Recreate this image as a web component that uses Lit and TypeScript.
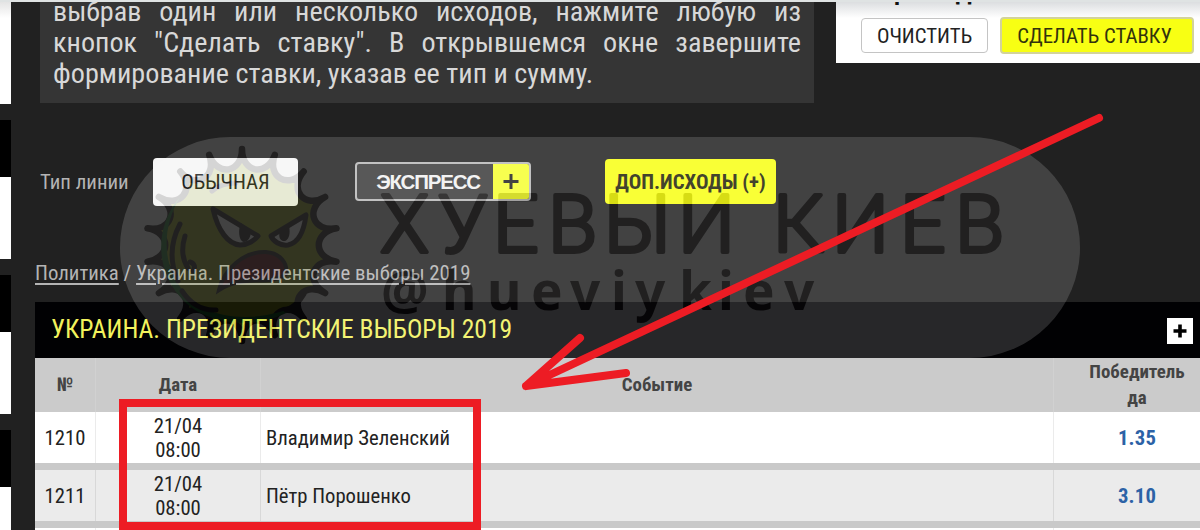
import { LitElement, html, css, svg } from 'lit'
import { customElement, property } from 'lit/decorators.js'

interface Outcome {
  id: string;
  day: string;
  time: string;
  name: string;
  odds: string;
}

@customElement('odds-table')
export class OddsTable extends LitElement {
  @property({type: String}) heading = '';
  @property({type: Array}) rows: Outcome[] = [];

  static styles = css`
    :host {
      display: block;
    }

    .bar {
      display: flex;
      align-items: center;
      justify-content: space-between;
      box-sizing: border-box;
      height: 56px;
      padding: 0 7px 2px 16px;
      background: #010103;
    }

    .title {
      color: #f2f25c;
      font-size: 25.6px;
      white-space: nowrap;
    }

    .add {
      width: 26px;
      height: 26px;
      margin-top: 4px;
    }

    .row {
      display: grid;
      grid-template-columns: 60px 165px 793px 167px;
      height: 51px;
      border-bottom: 7px solid #c9c9c9;
      background: #fff;
      color: #222;
      font-size: 20.7px;
      line-height: 24px;
    }

    .row.even {
      background: #ebebeb;
    }

    .row.head {
      height: 54px;
      border-bottom: 0;
      background: #cbcbcb;
      color: #444;
      font-size: 18.9px;
      font-weight: 700;
      line-height: 26px;
    }

    .cell {
      display: flex;
      align-items: center;
      justify-content: center;
      padding-top: 1px;
      text-align: center;
      border-left: 1px solid rgb(0 0 0 / 8%);
    }

    .head .cell {
      padding-top: 0;
      border-color: rgb(255 255 255 / 12%);
    }

    .cell:first-child {
      border-left: 0;
    }

    .name {
      justify-content: flex-start;
      padding-left: 5px;
    }

    .odds {
      color: #2c62a6;
      font-weight: 700;
      letter-spacing: 0.2px;
    }
  `

  render() {
    return html`
      <div class="bar">
        <div class="title">${this.heading}</div>
        <svg class="add" viewBox="0 0 26 26">
          <rect width="26" height="26" fill="#fff"/>
          <path d="M13 6.5v13M6.5 13h13" stroke="#000" stroke-width="3.6"/>
        </svg>
      </div>
      <div class="row head">
        <div class="cell">№</div>
        <div class="cell">Дата</div>
        <div class="cell">Событие</div>
        <div class="cell">Победитель<br>да</div>
      </div>
      ${this.rows.map((row, i) => html`
        <div class="row ${i % 2 ? 'even' : ''}">
          <div class="cell">${row.id}</div>
          <div class="cell">${row.day}<br>${row.time}</div>
          <div class="cell name">${row.name}</div>
          <div class="cell odds">${row.odds}</div>
        </div>
      `)}
    `
  }
}

@customElement('water-mark')
export class WaterMark extends LitElement {
  static styles = css`
    :host {
      display: block;
      opacity: 0.15;
    }

    svg {
      display: block;
    }

    .big {
      font: 300 80px Roboto, sans-serif;
      fill: #231f20;
      stroke: #231f20;
      stroke-width: 4px;
      stroke-linejoin: round;
    }

    .handle {
      font: 700 53px "Noto Sans", sans-serif;
      fill: #231f20;
    }
  `

  // body with 18 spikes, the valleys are curved inwards
  private _spikes() {
    const point = (deg: number, r: number) => {
      const a = (deg - 90) * Math.PI / 180;
      return `${(122 + r * Math.cos(a)).toFixed(1)} ${(108 + r * Math.sin(a)).toFixed(1)}`;
    }

    let d = `M${point(0, 96)}`;
    for (let i = 0; i < 18; i++) {
      const deg = i * 20;
      d += `C${point(deg, 72)} ${point(deg + 20, 72)} ${point(deg + 20, 96)}`;
    }
    return d + 'Z';
  }

  render() {
    return svg`
      <svg width="960" height="221" viewBox="0 0 960 221">
        <rect width="960" height="221" rx="110.5" fill="#fff"/>
        <path d=${this._spikes()} fill="#9aa81c" stroke="#231f20" stroke-width="6.5" stroke-linejoin="round"/>
        <path d="M60 60C36 100 44 150 86 172C110 184 150 182 178 168C150 192 94 192 66 166C34 136 34 90 60 60Z" fill="#1c7a2c"/>
        <g fill="none" stroke="#231f20" stroke-width="5" stroke-linecap="round">
          <path d="M60 87C50 106 50 126 58 144M65 99C61 112 62 122 68 131M70 125C74 126 76 130 73 134"/>
          <path d="M62 154C70 166 82 174 96 173M166 173C174 170 180 164 184 157M92 54C99 48 108 46 116 46"/>
        </g>
        <g fill="#fff" stroke="#231f20" stroke-width="5" stroke-linejoin="round">
          <path d="M93 72C98 94 108 107 120 108C128 108 135 103 138 99Z"/>
          <path d="M186 78C184 94 178 106 168 108C160 109 153 104 151 99Z"/>
        </g>
        <path d="M121 86l10 8c0 6-3 11-7 11s-7-10-3-19ZM160 94l9-5c2 9-1 15-5 15s-6-5-4-10Z" fill="#231f20"/>
        <path d="M99 153C104 132 124 114 146 115C160 116 168 126 166 137C150 150 124 136 99 153Z" fill="#6b1019" stroke="#231f20" stroke-width="4"/>
        <text class="big" y="115" x="260 318 373 428 484 558 653 712 780 835">ХУЕВЫИКИЕВ</text>
        <text class="handle" y="173" x="261 322 367 411 450 491 515 559 598 623 664">@hueviykiev</text>
      </svg>
    `
  }
}

@customElement('app-root')
export class AppRoot extends LitElement {
  @property({type: Array}) rows: Outcome[] = [
    {id: '1210', day: '21/04', time: '08:00', name: 'Владимир Зеленский', odds: '1.35'},
    {id: '1211', day: '21/04', time: '08:00', name: 'Пётр Порошенко', odds: '3.10'},
    {id: '', day: '', time: '', name: '', odds: ''},
  ];

  static styles = css`
    :host {
      position: relative;
      display: flex;
      box-sizing: border-box;
      width: 1200px;
      height: 530px;
      overflow: hidden;
      border-top: 2px solid #dfe3e3;
      background: #212121;
      font-family: "Roboto Condensed", Roboto, sans-serif;
      font-stretch: 75%;
    }

    .side {
      display: flex;
      flex: none;
      flex-direction: column;
      gap: 16px;
      width: 11px;
    }

    .block {
      flex: none;
      box-sizing: border-box;
      height: 139px;
      border-top: 57px solid #000;
      background: #fff;
    }

    .block:first-child {
      height: 102px;
      border-top: 0;
      background: linear-gradient(#e4e4e4, #fff 16px);
    }

    .main {
      flex: none;
      width: 1165px;
      margin-left: 24px;
    }

    .top {
      display: flex;
      align-items: flex-start;
      height: 101px;
      padding-left: 5px;
    }

    .hint {
      display: flex;
      flex-direction: column;
      justify-content: flex-end;
      box-sizing: border-box;
      width: 774px;
      height: 101px;
      padding: 0 13px 14px;
      overflow: hidden;
      background: #353535;
      color: #d8d8d8;
      font-size: 28.2px;
      line-height: 31px;
    }

    .line {
      text-align: justify;
      text-align-last: justify;
      white-space: nowrap;
    }

    .line.last {
      text-align-last: left;
    }

    .slip {
      flex: 1;
      box-sizing: border-box;
      height: 61px;
      margin-left: 22px;
      padding-left: 25px;
      overflow: hidden;
      background: linear-gradient(#dcdee0, #fff 16px);
    }

    .slip-title {
      display: flex;
      gap: 49px;
      height: 38px;
      margin-top: -23px;
      padding-left: 33px;
      color: #111;
      font-size: 25px;
      font-weight: 700;
      line-height: 25px;
    }

    .buttons {
      display: flex;
      gap: 12px;
    }

    .btn {
      display: flex;
      align-items: center;
      justify-content: center;
      box-sizing: border-box;
      border-radius: 4px;
      color: #222;
      font-size: 20.8px;
      white-space: nowrap;
    }

    .clear {
      width: 127px;
      height: 35px;
      margin-top: 1px;
      border: 1.5px solid #c4c4c4;
      background: #fff;
    }

    .bet {
      width: 194px;
      height: 37px;
      padding-right: 5px;
      border: 2px solid #d3d39a;
      background: #f8ff13;
      color: #33330c;
    }

    .types {
      display: flex;
      align-items: center;
      height: 47px;
      padding: 55px 0 0 5px;
    }

    .label {
      width: 113px;
      color: #b4b4b4;
      font-size: 20.8px;
    }

    .usual {
      width: 145px;
      height: 48px;
      background: #f6f6f6;
    }

    .express {
      width: 176px;
      height: 39px;
      margin-left: 57px;
      overflow: hidden;
      border: 2px solid #b8b8b8;
      background: #3b3b3b;
      color: #f2f2f2;
      font: 700 20.5px "Liberation Sans Narrow", "Liberation Sans", sans-serif;
      letter-spacing: -1.2px;
    }

    .express-text {
      flex: 1;
      text-align: center;
      padding-left: 6px;
    }

    .plus {
      width: 36px;
      height: 100%;
      background: #f6ff30;
    }

    .extra {
      width: 171px;
      height: 45px;
      margin-left: 74px;
      background: #f8ff13;
      color: #222208;
      font-weight: 700;
    }

    .crumbs {
      height: 41px;
      padding-top: 56px;
      color: #b4b4b4;
      font-size: 20.8px;
      line-height: 24px;
      white-space: nowrap;
    }

    .link {
      text-decoration: underline;
      text-underline-offset: 3px;
    }

    .mark {
      position: absolute;
      top: 135px;
      left: 120px;
    }

    .notes {
      position: absolute;
      top: -2px;
      left: 0;
    }
  `

  render() {
    return html`
      <div class="side">
        <div class="block"></div>
        <div class="block"></div>
        <div class="block"></div>
        <div class="block"></div>
      </div>
      <div class="main">
        <div class="top">
          <div class="hint">
            <div class="line">выбрав один или несколько исходов, нажмите любую из</div>
            <div class="line">кнопок "Сделать ставку". В открывшемся окне завершите</div>
            <div class="line last">формирование ставки, указав ее тип и сумму.</div>
          </div>
          <div class="slip">
            <div class="slip-title"><span>р</span><span>Д</span></div>
            <div class="buttons">
              <div class="btn clear">ОЧИСТИТЬ</div>
              <div class="btn bet">СДЕЛАТЬ СТАВКУ</div>
            </div>
          </div>
        </div>
        <div class="types">
          <div class="label">Тип линии</div>
          <div class="btn usual">ОБЫЧНАЯ</div>
          <div class="btn express">
            <span class="express-text">ЭКСПРЕСС</span>
            <svg class="plus" viewBox="0 0 36 35">
              <path d="M18 10v15M10.500 17.500h15" stroke="#222" stroke-width="3"/>
            </svg>
          </div>
          <div class="btn extra">ДОП.ИСХОДЫ (+)</div>
        </div>
        <div class="crumbs">
          <span class="link">Политика</span> / <span class="link">Украина. Президентские выборы 2019</span>
        </div>
        <odds-table heading="УКРАИНА. ПРЕЗИДЕНТСКИЕ ВЫБОРЫ 2019" .rows=${this.rows}></odds-table>
      </div>
      <water-mark class="mark"></water-mark>
      <svg class="notes" width="1200" height="530" fill="none" stroke="#ed1c24" stroke-width="8">
        <rect x="123" y="403" width="354" height="123"/>
        <path d="M1099 118L526 386L580 338M526 386L626 373" stroke-linecap="round" stroke-linejoin="round"/>
      </svg>
    `
  }
}
